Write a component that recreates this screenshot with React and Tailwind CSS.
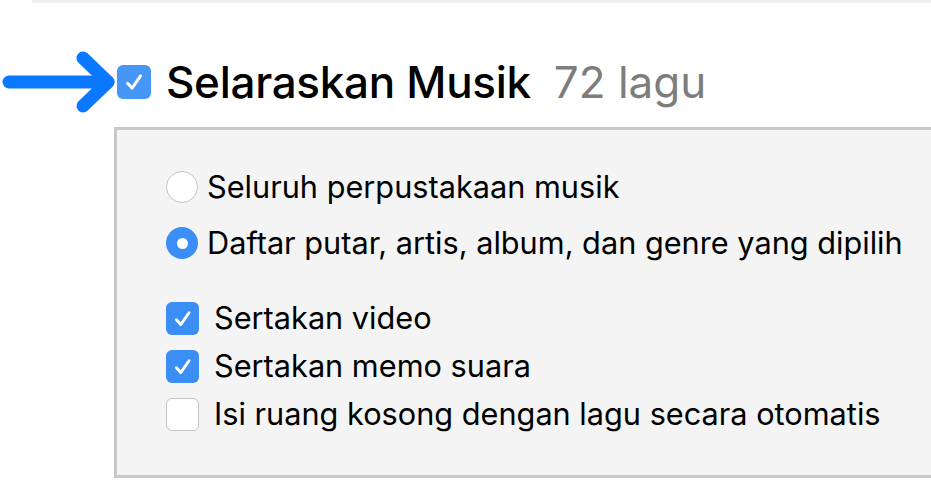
import React from 'react';

const font = { fontFamily: 'Inter, "Noto Sans", sans-serif' };

const Check = ({ size = 33, color = '#3b8ef6' }) => (
  <span
    className="flex shrink-0 items-center justify-center rounded-[6px]"
    style={{ width: size, height: size, background: color }}
  >
    <svg width={size * 0.72} height={size * 0.72} viewBox="0 0 20 20" fill="none">
      <path d="M4.5 10.8 L8.2 14.8 L15.2 4.8" stroke="white" strokeWidth="2.4" strokeLinecap="round" strokeLinejoin="round" />
    </svg>
  </span>
);

const EmptyBox = () => (
  <span className="block h-[33px] w-[33px] shrink-0 rounded-[6px] border border-[#c4c4c4] bg-white" />
);

const Radio = ({ on }) =>
  on ? (
    <span className="flex h-[32px] w-[32px] shrink-0 items-center justify-center rounded-full bg-[#3b8ef6]">
      <span className="block h-[11px] w-[11px] rounded-full bg-white" />
    </span>
  ) : (
    <span className="block h-[32px] w-[32px] shrink-0 rounded-full border border-[#c4c4c4] bg-white" />
  );

const Arrow = () => (
  <svg width="116" height="62" viewBox="0 0 116 62" className="shrink-0">
    <path d="M9 31 H108" stroke="#0a78ff" strokeWidth="13" strokeLinecap="round" />
    <path d="M83 7 L108 31 L83 55" stroke="#0a78ff" strokeWidth="13" strokeLinecap="round" strokeLinejoin="round" fill="none" />
  </svg>
);

export default function App() {
  return (
    <div className="h-[500px] w-[931px] overflow-hidden bg-white text-black" style={font}>
      <div className="ml-[32px] h-[3px] bg-[#efefef]" />
      <div className="mt-[48px] flex items-center">
        <Arrow />
        <span className="ml-[1px]">
          <Check size={34} color="#4596f7" />
        </span>
        <span className="ml-[15px] text-[44px] font-medium leading-none tracking-[-0.3px]">Selaraskan Musik</span>
        <span className="ml-[23px] text-[44px] leading-none text-[#7d7d7d]">72 lagu</span>
      </div>
      <div className="ml-[114px] mt-[14px] h-[351px] border-y-[3px] border-l-[3px] border-[#c8c8c8] bg-[#f4f4f4] pl-[49px] pt-[41px] text-[30.7px]">
        <div className="flex flex-col gap-[24px]">
          <label className="flex h-[32px] items-center gap-[9px]">
            <Radio />
            <span>Seluruh perpustakaan musik</span>
          </label>
          <label className="flex h-[32px] items-center gap-[9px]">
            <Radio on />
            <span>Daftar putar, artis, album, dan genre yang dipilih</span>
          </label>
        </div>
        <div className="mt-[43px] flex flex-col gap-[15px]">
          <label className="flex h-[33px] items-center gap-[15px]">
            <Check />
            <span>Sertakan video</span>
          </label>
          <label className="flex h-[33px] items-center gap-[15px]">
            <Check />
            <span>Sertakan memo suara</span>
          </label>
          <label className="flex h-[33px] items-center gap-[15px]">
            <EmptyBox />
            <span>Isi ruang kosong dengan lagu secara otomatis</span>
          </label>
        </div>
      </div>
    </div>
  );
}
